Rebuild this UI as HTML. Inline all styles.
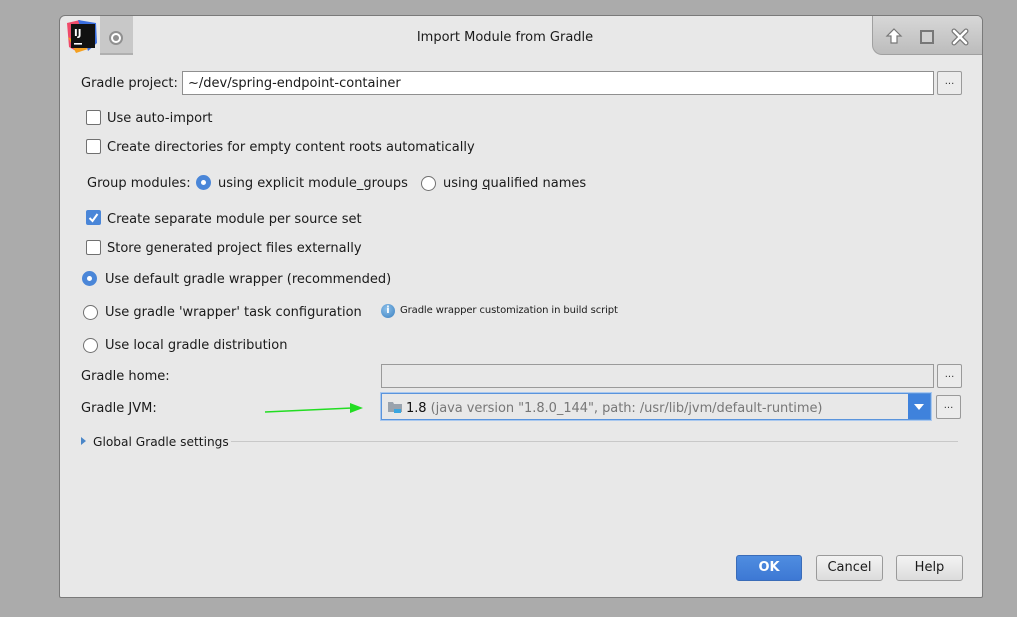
<!DOCTYPE html>
<html><head><meta charset="utf-8"><style>
body{margin:0;width:1017px;height:617px;background:#ababab;position:relative;overflow:hidden;font-family:"DejaVu Sans","Liberation Sans",sans-serif;font-size:13px;color:#1a1a1a}
.a{position:absolute;white-space:nowrap}
.t{position:absolute;white-space:nowrap;margin-top:2px}
#dlg{position:absolute;left:59px;top:15px;width:922px;height:581px;background:#e8e8e8;border:1px solid #7a7a7a;border-radius:6px 6px 2px 2px;overflow:hidden}
.cb{position:absolute;width:13px;height:13px;border:1px solid #707070;border-radius:2px;background:#fff}
.rb{position:absolute;width:13px;height:13px;border:1px solid #707070;border-radius:50%;background:#fff}
.rbs{position:absolute;width:15px;height:15px;border-radius:50%;background:#4a86d8}
.rbs:after{content:"";position:absolute;left:5px;top:5px;width:5px;height:5px;border-radius:50%;background:#fff}
.tf{position:absolute;background:#fff;border:1px solid #8f8f8f}
.dots{position:absolute;width:23px;height:22px;border:1px solid #9a9a9a;border-radius:2px;background:#ececec;font-size:10px;text-align:center;line-height:20px;color:#333}
.btn{position:absolute;height:24px;border:1px solid #9a9a9a;border-radius:3px;background:linear-gradient(#f3f3f3,#dcdcdc);text-align:center;line-height:24px}
</style></head><body>
<div id="dlg">
  <div class="a" style="left:40px;top:0;width:33px;height:37px;background:#c8c8c8;border-bottom:2px solid #b0b0b0"></div>
  <div class="a" style="left:49px;top:15px;width:10px;height:10px;border-radius:50%;background:#fff;border:2px solid #909090"></div>
  <div class="a" style="left:53px;top:19px;width:6px;height:6px;border-radius:50%;background:#909090"></div>
  <div class="a" style="left:812px;top:-1px;width:112px;height:39px;background:linear-gradient(#d8d8d8,#bcbcbc);border-left:1px solid #a0a0a0;border-bottom:1px solid #a0a0a0;border-radius:0 0 0 10px"></div>
  <svg class="a" style="left:825px;top:11px" width="18" height="18" viewBox="0 0 18 18"><path d="M9 2 L16 9 H12 V16 H6 V9 H2 Z" fill="#fff" stroke="#777" stroke-width="1.2"/></svg>
  <div class="a" style="left:860px;top:14px;width:10px;height:10px;border:2px solid #777;background:#d0d0d0"></div>
  <svg class="a" style="left:891px;top:12px" width="18" height="18" viewBox="0 0 18 18"><path d="M3 3 L15 15 M15 3 L3 15" stroke="#777" stroke-width="5" stroke-linecap="round"/><path d="M3 3 L15 15 M15 3 L3 15" stroke="#fff" stroke-width="2.6" stroke-linecap="round"/></svg>
  <div class="a" style="left:0;width:890px;top:14px;text-align:center;font-size:13px">Import Module from Gradle</div>
</div>
<!-- IJ logo -->
<svg class="a" style="left:66px;top:19px" width="34" height="34" viewBox="0 0 34 34">
<path d="M1 4 L14 1 L20 10 L10 32 L3 28 Z" fill="#f04a6a"/>
<path d="M12 1 L30 4 L31 24 L22 32 Z" fill="#3b6fe0"/>
<path d="M2 18 L10 34 L22 30 Z" fill="#f5a020"/>
<rect x="5" y="5" width="24" height="24" fill="#111"/>
<text x="8" y="17" font-size="10" font-weight="bold" fill="#fff" font-family="DejaVu Sans">IJ</text>
<rect x="8" y="24" width="8" height="1.6" fill="#fff"/>
</svg>

<div class="t" style="left:81px;top:74px">Gradle project:</div>
<div class="tf" style="left:182px;top:71px;width:750px;height:22px"></div>
<div class="t" style="left:188px;top:74px">~/dev/spring-endpoint-container</div>
<div class="dots" style="left:937px;top:71px">...</div>

<div class="cb" style="left:86px;top:110px"></div><div class="t" style="left:107px;top:109px">Use auto-import</div>
<div class="cb" style="left:86px;top:139px"></div><div class="t" style="left:107px;top:138px">Create directories for empty content roots automatically</div>

<div class="t" style="left:87px;top:174px">Group modules:</div>
<div class="rbs" style="left:196px;top:175px"></div><div class="t" style="left:218px;top:174px">using explicit module_groups</div>
<div class="rb" style="left:421px;top:176px"></div><div class="t" style="left:443px;top:174px">using <u>q</u>ualified names</div>

<div class="a" style="left:86px;top:210px;width:15px;height:15px;background:#4a86d8;border-radius:2px"></div>
<svg class="a" style="left:86px;top:210px" width="15" height="15"><path d="M3.5 8 L6.5 11 L11.5 4" stroke="#fff" stroke-width="2" fill="none"/></svg>
<div class="t" style="left:107px;top:210px">Create separate module per source set</div>
<div class="cb" style="left:86px;top:240px"></div><div class="t" style="left:107px;top:239px">Store generated project files externally</div>

<div class="rbs" style="left:82px;top:271px"></div><div class="t" style="left:105px;top:270px">Use default gradle wrapper (recommended)</div>
<div class="rb" style="left:83px;top:305px"></div><div class="t" style="left:105px;top:303px">Use gradle 'wrapper' task configuration</div>
<div class="a" style="left:381px;top:304px;width:14px;height:14px;border-radius:50%;background:radial-gradient(circle at 40% 35%,#8cc0ea,#3a7fc0)"></div>
<div class="a" style="left:381px;top:304px;width:14px;text-align:center;color:#fff;font-size:10px;font-weight:bold;line-height:14px">i</div>
<div class="t" style="left:400px;top:303px;font-size:10px;letter-spacing:-0.1px">Gradle wrapper customization in build script</div>
<div class="rb" style="left:83px;top:338px"></div><div class="t" style="left:105px;top:336px">Use local gradle distribution</div>

<div class="t" style="left:81px;top:367px">Gradle home:</div>
<div class="a" style="left:381px;top:364px;width:551px;height:22px;border:1px solid #9a9a9a;background:#e8e8e8"></div>
<div class="dots" style="left:937px;top:364px">...</div>

<div class="t" style="left:81px;top:399px">Gradle JVM:</div>
<svg class="a" style="left:264px;top:401px" width="100" height="16"><path d="M1 11 L88 7" stroke="#22dd22" stroke-width="1.5"/><path d="M86 2 L99 7 L86 12 Z" fill="#22dd22"/></svg>
<div class="a" style="left:381px;top:393px;width:548px;height:25px;border:1px solid #5a94dc;box-shadow:0 0 0 1px #a9c8ef;background:#e8e8e8"></div>
<div class="a" style="left:908px;top:394px;width:22px;height:25px;background:#3f82dc"></div>
<svg class="a" style="left:913px;top:402px" width="12" height="10"><path d="M1 2 H11 L6 8 Z" fill="#fff"/></svg>
<svg class="a" style="left:387px;top:399px" width="16" height="16"><path d="M1 3 H6 L7 5 H15 V13 H1 Z" fill="#9aa3ad"/><rect x="7" y="10" width="7" height="4" fill="#3aa6e0"/></svg>
<div class="t" style="left:406px;top:399px;letter-spacing:-0.05px"><span style="color:#111">1.8</span> <span style="color:#777">(java version "1.8.0_144", path: /usr/lib/jvm/default-runtime)</span></div>
<div class="dots" style="left:936px;top:395px">...</div>

<svg class="a" style="left:81px;top:437px" width="6" height="8"><path d="M0 0 L5 4 L0 8 Z" fill="#4a86c8"/></svg>
<div class="t" style="left:93px;top:433px;font-size:12.2px">Global Gradle settings</div>
<div class="a" style="left:231px;top:441px;width:727px;height:1px;background:#c8c8c8"></div>

<div class="btn" style="left:736px;top:555px;width:64px;background:linear-gradient(#4f8de0,#3d78d4);border-color:#3a6cb8;color:#fff;font-weight:bold">OK</div>
<div class="btn" style="left:816px;top:555px;width:65px">Cancel</div>
<div class="btn" style="left:896px;top:555px;width:65px">Help</div>
</body></html>
